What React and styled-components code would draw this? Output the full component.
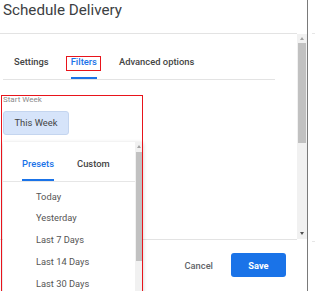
import React from "react";
import styled, { createGlobalStyle } from "styled-components";

const GlobalStyle = createGlobalStyle`
  html, body {
    margin: 0;
    padding: 0;
    background: #fff;
    overflow: hidden;
  }
  body {
    font-family: Roboto, "Liberation Sans", sans-serif;
  }
`;

const Page = styled.div`
  display: flex;
  height: 291px;
  overflow: hidden;
`;

const Dialog = styled.div`
  width: 308px;
  flex-shrink: 0;
  box-sizing: border-box;
  border-right: 1px solid #7a7a7a;
  display: flex;
  flex-direction: column;
`;

const Header = styled.div`
  height: 33px;
  padding: 1px 0 0 3px;
  box-sizing: border-box;
`;

const Title = styled.h1`
  margin: 0;
  font-size: 15.2px;
  font-weight: 400;
  color: #3c4043;
  line-height: normal;
`;

const Body = styled.div`
  display: flex;
  height: 207px;
  flex-shrink: 0;
`;

const Main = styled.div`
  flex: 1;
  border-top: 1px solid #e3e3e3;
  border-bottom: 1px solid #e3e3e3;
  padding-left: 3px;
  box-sizing: border-box;
`;

const TabBar = styled.div`
  display: flex;
  gap: 22px;
  width: 272px;
  margin-top: 21px;
  padding-left: 11px;
  box-sizing: border-box;
  border-bottom: 1px solid #e3e3e3;
`;

const Tab = styled.div`
  position: relative;
  font-size: 9.4px;
  line-height: 14px;
  font-weight: 500;
  padding-bottom: 8px;
  color: ${({ active }) => (active ? "#1a73e8" : "#444")};
  border-bottom: 2px solid ${({ active }) => (active ? "#1a73e8" : "transparent")};

  ${({ marked }) =>
    marked &&
    `
    &::after {
      content: "";
      position: absolute;
      top: 1px;
      left: -5px;
      right: -4px;
      height: 15px;
      box-sizing: border-box;
      border: 1px solid #e8141b;
    }
  `}
`;

const Field = styled.div`
  position: relative;
  margin-top: 15px;
  height: 200px;

  &::after {
    content: "";
    position: absolute;
    top: 0;
    left: -2px;
    width: 142px;
    height: 220px;
    box-sizing: border-box;
    border: 1px solid #e8141b;
    z-index: 3;
    pointer-events: none;
  }
`;

const Label = styled.div`
  margin-top: 2px;
  font-size: 8px;
  font-weight: 400;
  line-height: 10px;
  color: #8a8a8a;
`;

const WeekButton = styled.button`
  margin-top: 6px;
  width: 66px;
  height: 24px;
  box-sizing: border-box;
  background: #d6e4fa;
  border: 1px solid #c4d5ef;
  border-radius: 3px;
  font-family: inherit;
  font-size: 9.4px;
  color: #444;
  padding: 0;
`;

const Popup = styled.div`
  position: absolute;
  top: 47px;
  left: 0;
  width: 140px;
  height: 170px;
  background: #fff;
  display: flex;
  z-index: 2;
  box-shadow: 0 1px 4px rgba(0, 0, 0, 0.2);
`;

const PopupMain = styled.div`
  flex: 1;
`;

const PopupTabs = styled.div`
  display: flex;
  gap: 23px;
  padding: 15px 0 0 19px;
  border-bottom: 1px solid #e6e6e6;
`;

const PresetList = styled.ul`
  list-style: none;
  margin: 0;
  padding: 4px 0 0 33px;
`;

const Preset = styled.li`
  height: 21.8px;
  line-height: 21.8px;
  font-size: 9.3px;
  color: #555;
`;

const Track = styled.div`
  width: ${({ w }) => w}px;
  flex-shrink: 0;
  background: #f1f1f1;
  display: flex;
  flex-direction: column;
  align-items: center;
  margin: ${({ inset }) => (inset ? "1px 0" : "0")};
`;

const ArrowBox = styled.div`
  height: ${({ h }) => h}px;
  display: flex;
  align-items: center;
  justify-content: center;
`;

const Triangle = styled.div`
  width: 0;
  height: 0;
  border-left: 2.5px solid transparent;
  border-right: 2.5px solid transparent;
  ${({ down }) =>
    down
      ? "border-top: 3px solid #505050;"
      : "border-bottom: 3px solid #a3a3a3;"}
`;

const Thumb = styled.div`
  align-self: stretch;
  margin: 0 1px;
  height: ${({ h }) => h}px;
  background: #c1c1c1;
`;

const Spacer = styled.div`
  flex: 1;
`;

const Footer = styled.div`
  height: 52px;
  display: flex;
  align-items: center;
  justify-content: flex-end;
  gap: 10px;
  padding-right: 21px;
`;

const TextButton = styled.button`
  background: none;
  border: none;
  padding: 0 8px;
  font-family: inherit;
  font-size: 9.3px;
  font-weight: 500;
  color: #5f6368;
`;

const PrimaryButton = styled.button`
  width: 55px;
  height: 24px;
  border: none;
  border-radius: 3px;
  background: #1a73e8;
  color: #fff;
  font-family: inherit;
  font-size: 9.3px;
  font-weight: 700;
  padding: 0;
`;

const Strip = styled.div`
  flex: 1;
  padding-left: 4px;
`;

const StripLine = styled.div`
  height: 1px;
  background: #e6e6e6;
  margin-top: ${({ top }) => top}px;
`;

const Scrollbar = ({ width, arrowTop, thumb, arrowBottom, inset, noDown }) => (
  <Track w={width} inset={inset}>
    <ArrowBox h={arrowTop}>
      <Triangle />
    </ArrowBox>
    <Thumb h={thumb} />
    <Spacer />
    {!noDown && (
      <ArrowBox h={arrowBottom}>
        <Triangle down />
      </ArrowBox>
    )}
  </Track>
);

const presets = ["Today", "Yesterday", "Last 7 Days", "Last 14 Days", "Last 30 Days"];

export default function App() {
  return (
    <>
      <GlobalStyle />
      <Page>
        <Dialog>
          <Header>
            <Title>Schedule Delivery</Title>
          </Header>
          <Body>
            <Main>
              <TabBar>
                <Tab>Settings</Tab>
                <Tab active marked>
                  Filters
                </Tab>
                <Tab>Advanced options</Tab>
              </TabBar>
              <Field>
                <Label>Start Week</Label>
                <WeekButton>This Week</WeekButton>
                <Popup>
                  <PopupMain>
                    <PopupTabs>
                      <Tab active>Presets</Tab>
                      <Tab>Custom</Tab>
                    </PopupTabs>
                    <PresetList>
                      {presets.map((p) => (
                        <Preset key={p}>{p}</Preset>
                      ))}
                    </PresetList>
                  </PopupMain>
                  <Scrollbar width={8} arrowTop={10} thumb={109} noDown />
                </Popup>
              </Field>
            </Main>
            <Scrollbar width={10} arrowTop={9} thumb={100} arrowBottom={10} inset />
          </Body>
          <Footer>
            <TextButton>Cancel</TextButton>
            <PrimaryButton>Save</PrimaryButton>
          </Footer>
        </Dialog>
        <Strip>
          <StripLine top={33} />
          <StripLine top={207} />
        </Strip>
      </Page>
    </>
  );
}
